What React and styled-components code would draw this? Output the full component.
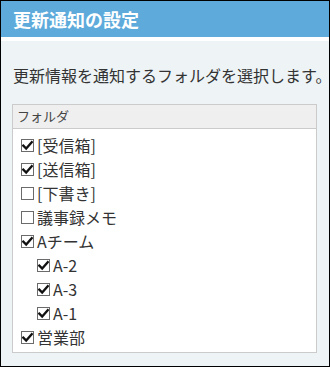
import React from "react";
import styled, { createGlobalStyle } from "styled-components";

const Global = createGlobalStyle`
  html, body { margin: 0; padding: 0; background: #fff; }
  * { box-sizing: border-box; }
`;

const Frame = styled.div`
  width: 330px;
  height: 367px;
  border: 1px solid #000;
  background: #eef3f6;
  font-family: "Noto Sans CJK JP", "Noto Sans", sans-serif;
  color: #333;
  display: flex;
  flex-direction: column;
`;

const Header = styled.div`
  height: 40px;
  background: #5daadb;
  border-bottom: 4px solid #fff;
  color: #fff;
  font-size: 18px;
  font-weight: 700;
  line-height: 36px;
  padding-left: 12px;
`;

const Body = styled.div`
  padding: 22px 12px 0 11px;
`;

const Lead = styled.p`
  margin: 0 0 17px 1px;
  font-size: 16px;
  line-height: 24px;
  white-space: nowrap;
`;

const Table = styled.div`
  border: 1px solid #cbcbcb;
  background: #fff;
`;

const TableHead = styled.div`
  height: 24px;
  background: #efefef;
  border-bottom: 1px solid #cbcbcb;
  font-size: 13px;
  line-height: 22px;
  padding-left: 4px;
  color: #444;
`;

const List = styled.div`
  padding: 4px 0 3px 8px;
  display: flex;
  flex-direction: column;
`;

const Row = styled.label`
  display: flex;
  align-items: center;
  height: 24px;
  padding-left: ${(p) => p.$level * 16}px;
  font-size: 16px;
  line-height: 24px;
  white-space: nowrap;
`;

const Box = styled.span`
  width: 13px;
  height: 13px;
  border: 1px solid #6b6b6b;
  background: #fff;
  margin-right: 3px;
  display: inline-flex;
  align-items: center;
  justify-content: center;
  flex: none;
`;

function Check({ checked }) {
  return (
    <Box>
      {checked && (
        <svg width="11" height="11" viewBox="0 0 11 11">
          <path d="M1.3 5.6 L4.2 8.6 L9.8 2.2" fill="none" stroke="#111" strokeWidth="2.3" strokeLinecap="square" strokeLinejoin="miter" />
        </svg>
      )}
    </Box>
  );
}

const items = [
  { label: "[受信箱]", checked: true, level: 0 },
  { label: "[送信箱]", checked: true, level: 0 },
  { label: "[下書き]", checked: false, level: 0 },
  { label: "議事録メモ", checked: false, level: 0 },
  { label: "Aチーム", checked: true, level: 0 },
  { label: "A-2", checked: true, level: 1 },
  { label: "A-3", checked: true, level: 1 },
  { label: "A-1", checked: true, level: 1 },
  { label: "営業部", checked: true, level: 0 },
];

export default function App() {
  return (
    <>
      <Global />
      <Frame>
        <Header>更新通知の設定</Header>
        <Body>
          <Lead>更新情報を通知するフォルダを選択します。</Lead>
          <Table>
            <TableHead>フォルダ</TableHead>
            <List>
              {items.map((it) => (
                <Row key={it.label} $level={it.level}>
                  <Check checked={it.checked} />
                  {it.label}
                </Row>
              ))}
            </List>
          </Table>
        </Body>
      </Frame>
    </>
  );
}
